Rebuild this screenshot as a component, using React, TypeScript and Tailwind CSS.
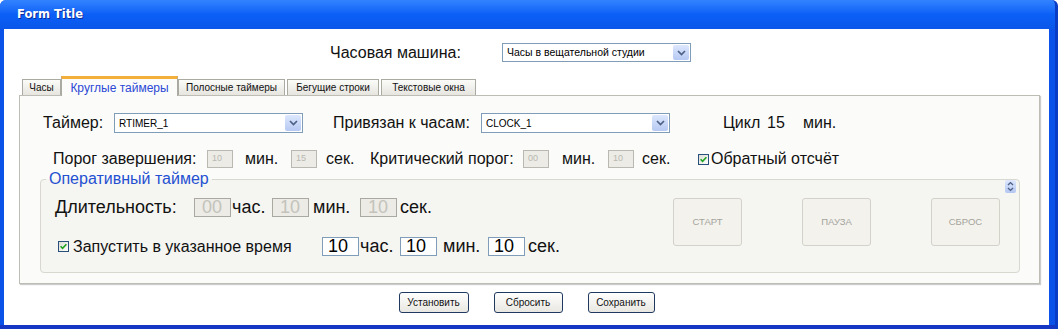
import React from "react";

const Chevron = () => (
  <svg width="9" height="6" viewBox="0 0 9 6">
    <path d="M1 1 L4.5 4.5 L8 1" fill="none" stroke="#4d6185" strokeWidth="1.7" />
  </svg>
);

const Select = ({ value, className, textClass }: { value: string; className: string; textClass: string }) => (
  <div className={`flex items-center border border-[#7f9db9] bg-white ${className}`}>
    <span className={`flex-1 truncate pl-[4px] text-black ${textClass}`}>{value}</span>
    <span className="mr-px flex h-[calc(100%-2px)] w-[16px] items-center justify-center rounded-[2px] bg-linear-to-b from-[#dde7fd] to-[#b6c9f3]">
      <Chevron />
    </span>
  </div>
);

const Check = () => (
  <svg width="11" height="11" viewBox="0 0 11 11" className="shrink-0">
    <defs>
      <linearGradient id="cbg" x1="0" y1="0" x2="1" y2="1">
        <stop offset="0" stopColor="#dcdcd4" />
        <stop offset="1" stopColor="#ffffff" />
      </linearGradient>
    </defs>
    <rect x="0.5" y="0.5" width="10" height="10" fill="url(#cbg)" stroke="#29507a" />
    <path d="M2.6 5.2 L4.6 7.3 L8.4 3.2" fill="none" stroke="#22a322" strokeWidth="1.6" />
  </svg>
);

const Spinner = () => (
  <svg width="11" height="13" viewBox="0 0 11 13">
    <defs>
      <linearGradient id="spg" x1="0" y1="0" x2="0" y2="1">
        <stop offset="0" stopColor="#dfe8fd" />
        <stop offset="1" stopColor="#b3c6f2" />
      </linearGradient>
    </defs>
    <rect x="0" y="0" width="11" height="13" rx="2" fill="url(#spg)" />
    <path d="M3 5 L5.5 2.6 L8 5" fill="none" stroke="#4d6185" strokeWidth="1.4" />
    <path d="M3 8 L5.5 10.4 L8 8" fill="none" stroke="#4d6185" strokeWidth="1.4" />
  </svg>
);

const SmallBox = ({ v }: { v: string }) => (
  <div className="flex h-[18px] w-[26px] items-center border border-[#b9b8b1] bg-[#ecebe6] pl-[4px] text-[9px] text-[#b8b8b0]">
    {v}
  </div>
);

const BigBox = ({ v, off }: { v: string; off?: boolean }) =>
  off ? (
    <div className="flex h-[19px] w-[37px] items-center border border-[#a9a8a1] bg-[#ecebe6] pl-[7px] text-[18px] text-[#c3c3bb]">
      {v}
    </div>
  ) : (
    <div className="flex h-[19px] w-[37px] items-center border border-[#7f9db9] bg-white pl-[5px] text-[18px] text-black">
      {v}
    </div>
  );

const PadButton = ({ label }: { label: string }) => (
  <div className="flex h-[48px] w-[69px] items-center justify-center rounded-[3px] border border-[#d3d2ca] bg-[#f3f2ed] text-[9.5px] text-[#a4a49c]">
    {label}
  </div>
);

const App = () => {
  return (
    <div className="flex h-[329px] w-[1058px] flex-col overflow-hidden rounded-t-[6px] border-r-[3px] border-r-[#0a3cc6] bg-[#0b52e8] font-['Liberation_Sans',Arial,sans-serif] text-[#111]">
      {/* Title bar */}
      <div className="flex h-[29px] shrink-0 items-center bg-linear-to-b from-[#3383ff] via-[#0b5ff6] to-[#0a57ea] pl-[17px] font-['DejaVu_Sans',sans-serif] text-[11.5px] font-bold text-white [text-shadow:1px_1px_0_#0a2f9c]">
        Form Title
      </div>

      <div className="flex flex-1 border-b-[4px] border-b-[#1537c4] pl-[4px] pr-[6px]">
        <div className="flex flex-1 flex-col bg-white">
          {/* Clock machine */}
          <div className="mt-[14px] flex h-[19px] items-center pl-[326px]">
            <span className="w-[172px] text-[16px]">Часовая машина:</span>
            <Select value="Часы в вещательной студии" className="h-[19px] w-[189px]" textClass="text-[10.5px]" />
          </div>

          {/* Tabs */}
          <div className="mt-[14px] ml-[15px] mr-[9px]">
            <div className="flex h-[19px] items-end pl-[3px]">
              <div className="flex h-[16px] w-[39px] items-center justify-center border border-b-0 border-[#aaa9a2] bg-linear-to-b from-[#fbfbf9] to-[#e6e5df] text-[10px]">
                Часы
              </div>
              <div className="relative z-10 -mb-px flex h-[20px] w-[117px] items-center justify-center border-x border-t-[3px] border-x-[#aaa9a2] border-t-[#f4ae3a] bg-[#fbfbf9] text-[12px] text-[#2b48d6]">
                Круглые таймеры
              </div>
              <div className="flex h-[16px] w-[107px] items-center justify-center border border-b-0 border-[#aaa9a2] bg-linear-to-b from-[#fbfbf9] to-[#e6e5df] text-[10px]">
                Полосные таймеры
              </div>
              <div className="ml-[2px] flex h-[16px] w-[92px] items-center justify-center border border-b-0 border-[#aaa9a2] bg-linear-to-b from-[#fbfbf9] to-[#e6e5df] text-[10px]">
                Бегущие строки
              </div>
              <div className="ml-[2px] flex h-[16px] w-[95px] items-center justify-center border border-b-0 border-[#aaa9a2] bg-linear-to-b from-[#fbfbf9] to-[#e6e5df] text-[10px]">
                Текстовые окна
              </div>
            </div>

            {/* Tab panel */}
            <div className="flex h-[189px] flex-col border border-[#bdbcb5] bg-[#fbfbf9] shadow-[1px_1px_1px_rgba(0,0,0,0.2)]">
              {/* Timer row */}
              <div className="mt-[17px] ml-[23px] flex h-[20px] items-center text-[16px]">
                <span className="w-[71px]">Таймер:</span>
                <Select value="RTIMER_1" className="h-[20px] w-[189px]" textClass="text-[10px]" />
                <span className="ml-[30px] w-[148px]">Привязан к часам:</span>
                <Select value="CLOCK_1" className="h-[20px] w-[189px]" textClass="text-[10px]" />
                <span className="ml-[53px] w-[44px]">Цикл</span>
                <span className="w-[36px]">15</span>
                <span>мин.</span>
              </div>

              {/* Thresholds row */}
              <div className="mt-[17px] ml-[33px] flex h-[18px] items-center text-[16px]">
                <span className="w-[154px]">Порог завершения:</span>
                <SmallBox v="10" />
                <span className="ml-[12px] w-[46px]">мин.</span>
                <SmallBox v="15" />
                <span className="ml-[9px] w-[44px]">сек.</span>
                <span className="w-[153px]">Критический порог:</span>
                <SmallBox v="00" />
                <span className="ml-[13px] w-[46px]">мин.</span>
                <SmallBox v="10" />
                <span className="ml-[8px] w-[56px]">сек.</span>
                <Check />
                <span className="ml-[2px]">Обратный отсчёт</span>
              </div>

              {/* Operative timer */}
              <fieldset className="relative mt-[2px] ml-[20px] w-[980px] rounded-[4px] border border-[#d9d8d0] bg-[#f5f5f1] pt-[10px] pb-[16px]">
                <legend className="ml-[5px] px-[3px] text-[16px] leading-[18px] text-[#2450d2]">Оперативный таймер</legend>
                <div className="absolute top-[-8px] right-[3px]">
                  <Spinner />
                </div>
                <div className="flex items-start">
                  <div className="flex w-[632px] flex-col">
                    <div className="ml-[14px] flex h-[19px] items-center text-[18px]">
                      <span className="w-[139px]">Длительность:</span>
                      <BigBox v="00" off />
                      <span className="ml-[1px] w-[40px]">час.</span>
                      <BigBox v="10" off />
                      <span className="ml-[4px] w-[47px]">мин.</span>
                      <BigBox v="10" off />
                      <span className="ml-[3px]">сек.</span>
                    </div>
                    <div className="mt-[20px] ml-[17px] flex h-[19px] items-center text-[18px]">
                      <span className="flex w-[264px] items-center text-[16px]">
                        <Check />
                        <span className="ml-[4px]">Запустить в указанное время</span>
                      </span>
                      <BigBox v="10" />
                      <span className="ml-[1px] w-[40px]">час.</span>
                      <BigBox v="10" />
                      <span className="ml-[6px] w-[45px]">мин.</span>
                      <BigBox v="10" />
                      <span className="ml-[3px]">сек.</span>
                    </div>
                  </div>
                  <div className="flex gap-[60px]">
                    <PadButton label="СТАРТ" />
                    <PadButton label="ПАУЗА" />
                    <PadButton label="СБРОС" />
                  </div>
                </div>
              </fieldset>
            </div>
          </div>

          {/* Footer buttons */}
          <div className="mt-[8px] flex justify-center gap-[25px] text-[10px]">
            <div className="flex h-[21px] w-[70px] items-center justify-center rounded-[3px] border border-[#1f3a5e] bg-linear-to-b from-white to-[#e8e7e1]">
              Установить
            </div>
            <div className="flex h-[21px] w-[69px] items-center justify-center rounded-[3px] border border-[#1f3a5e] bg-linear-to-b from-white to-[#e8e7e1]">
              Сбросить
            </div>
            <div className="flex h-[21px] w-[67px] items-center justify-center rounded-[3px] border border-[#1f3a5e] bg-linear-to-b from-white to-[#e8e7e1]">
              Сохранить
            </div>
          </div>
        </div>
      </div>
    </div>
  );
};

export default App;
